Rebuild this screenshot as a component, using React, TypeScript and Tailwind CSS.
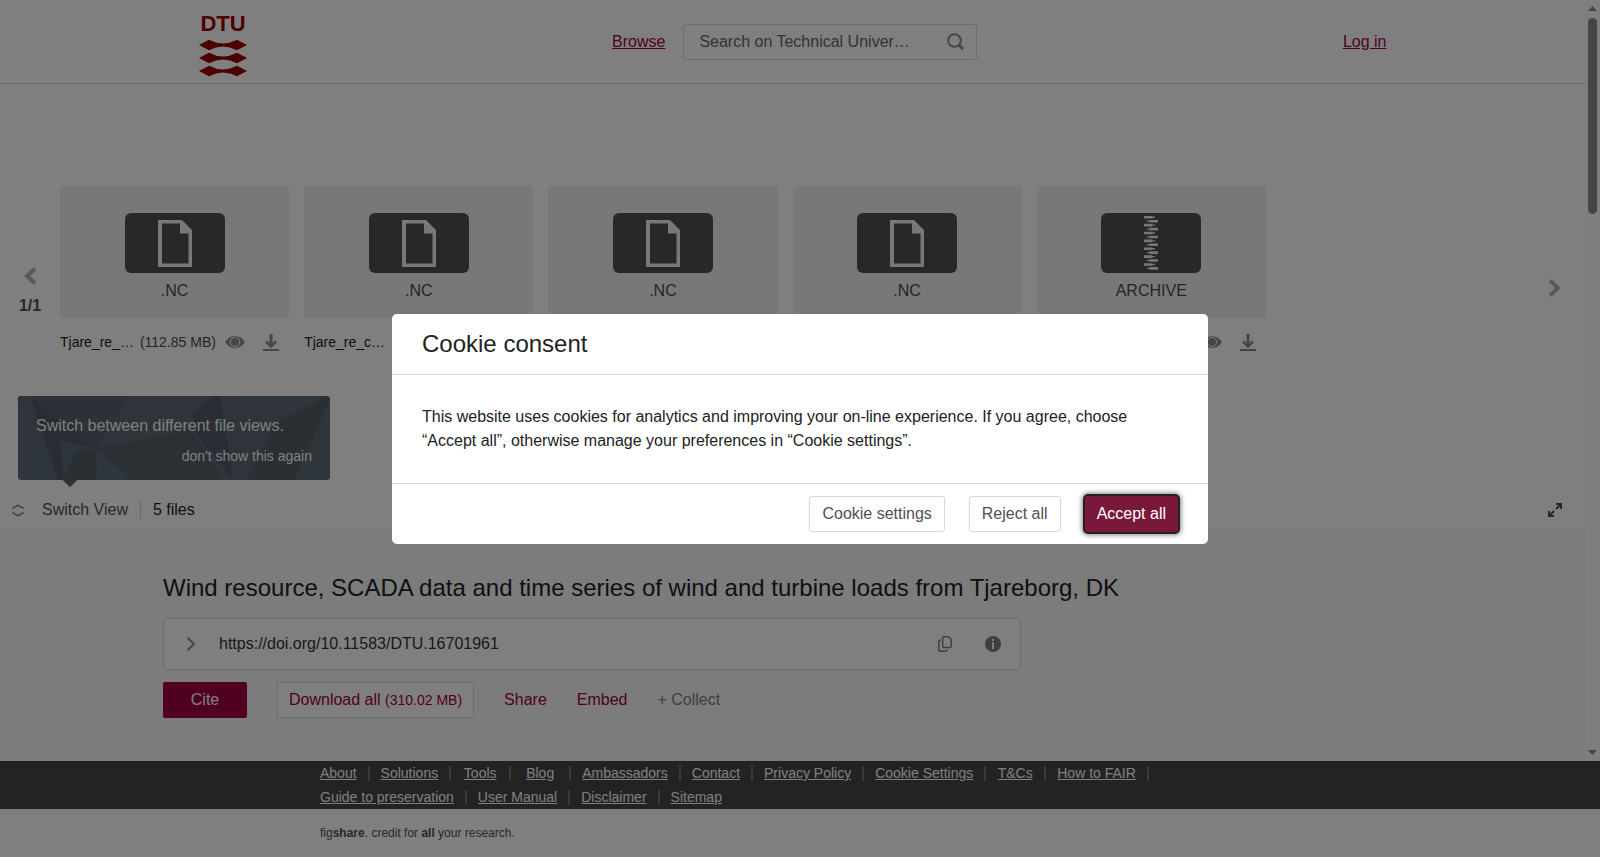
import type { ReactNode } from 'react';

type FileEntry = {
  id: number;
  kind: 'doc' | 'zip';
  label: string;
  name?: string;
  size?: string;
};

const files: FileEntry[] = [
  { id: 1, kind: 'doc', label: '.NC', name: 'Tjare_re_…', size: '(112.85 MB)' },
  { id: 2, kind: 'doc', label: '.NC', name: 'Tjare_re_c…' },
  { id: 3, kind: 'doc', label: '.NC' },
  { id: 4, kind: 'doc', label: '.NC' },
  { id: 5, kind: 'zip', label: 'ARCHIVE' },
];

const footerLinks = [
  'About',
  'Solutions',
  'Tools',
  'Blog',
  'Ambassadors',
  'Contact',
  'Privacy Policy',
  'Cookie Settings',
  'T&Cs',
  'How to FAIR',
  'Guide to preservation',
  'User Manual',
  'Disclaimer',
  'Sitemap',
];

function Logo() {
  return (
    <svg width="48" height="72" viewBox="0 0 48 72" fill="#990000" aria-label="DTU" role="img">
      <text
        x="24"
        y="25"
        textAnchor="middle"
        fontSize="22"
        fontWeight="700"
        fontFamily="'Liberation Sans', Arial, sans-serif"
      >
        DTU
      </text>
      {[39, 52, 65].map((y) => (
        <path
          key={y}
          transform={`translate(0 ${y})`}
          d="M0 0 L10 -5.3 Q17 -1.6 24 -1.6 Q31 -1.6 38 -5.3 L48 0 L38 5.3 Q31 1.6 24 1.6 Q17 1.6 10 5.3Z"
        />
      ))}
    </svg>
  );
}

function Header() {
  return (
    <header className="border-b border-[#d8d8d8]">
      <div className="mx-auto flex h-[83px] w-full max-w-[1188px] items-center justify-between">
        <a href="#home">
          <Logo />
        </a>
        <div className="flex items-center gap-[18px]">
          <a href="#browse" className="text-[#a00040] underline">
            Browse
          </a>
          <form className="flex h-9 w-[294px] items-center rounded-[3px] border border-[#d8d8d8] pr-3 pl-[15px]">
            <input
              type="text"
              aria-label="Search"
              placeholder="Search on Technical Univer…"
              className="min-w-0 flex-1 bg-transparent outline-none placeholder:text-[#666]"
            />
            <button type="button" aria-label="Submit search">
              <svg width="17" height="17" viewBox="0 0 17 17" fill="none" stroke="#8c8c8c">
                <circle cx="7.5" cy="7.5" r="6.3" strokeWidth="2" />
                <path d="M11.8 11.8 L16 16" strokeWidth="3" />
              </svg>
            </button>
          </form>
        </div>
        <a href="#login" className="text-[#a00040] underline">
          Log in
        </a>
      </div>
    </header>
  );
}

function DocIcon() {
  return (
    <svg width="34" height="47" viewBox="0 0 34 47" fill="#f1f1f1">
      <path fillRule="evenodd" d="M0 0 H24 L34 10 V47 H0Z M4 3.5 V43.5 H30.5 V13.5 H22 V3.5Z" />
    </svg>
  );
}

function ZipIcon() {
  const teeth = Array.from({ length: 14 }, (_, i) => i);
  return (
    <svg width="14" height="54" viewBox="0 0 14 54" fill="#f1f1f1">
      {teeth.map((i) => (
        <path
          key={i}
          transform={`translate(0 ${i * 3.93})`}
          d={i % 2 === 0 ? 'M0 0 H8 V0.6 H11 V2 H8 V2.6 H0Z' : 'M14 0 H6 V0.6 H3 V2 H6 V2.6 H14Z'}
        />
      ))}
    </svg>
  );
}

function EyeIcon() {
  return (
    <svg width="20" height="12" viewBox="0 0 20 12">
      <path d="M0 6 Q4 0 10 0 Q16 0 20 6 Q16 12 10 12 Q4 12 0 6Z" fill="#8c8c8c" />
      <circle cx="10" cy="6" r="4.7" fill="#8c8c8c" stroke="#fff" strokeWidth="1" />
    </svg>
  );
}

function DownloadIcon() {
  return (
    <svg width="16" height="17" viewBox="0 0 16 17" fill="none" stroke="#8c8c8c">
      <path d="M8 0 V12" strokeWidth="3" />
      <path d="M3 7.5 L8 12.5 L13 7.5" strokeWidth="2.6" />
      <path d="M0 16 H16" strokeWidth="2" />
    </svg>
  );
}

function FileCard({ file }: { file: FileEntry }) {
  return (
    <div className="min-w-0">
      <div className="flex h-[132px] flex-col items-center rounded-[3px] bg-[#f1f1f1] pt-[27px]">
        <div className="flex h-[60px] w-[100px] items-center justify-center rounded-md bg-[#505050]">
          {file.kind === 'doc' ? <DocIcon /> : <ZipIcon />}
        </div>
        <div className="mt-[6px] text-[#4a4a4a]">{file.label}</div>
      </div>
      <div className="mt-3 flex h-6 items-center pr-[10px] text-sm">
        {file.name && (
          <a href="#file" className="min-w-0 truncate text-[#222]">
            {file.name}
          </a>
        )}
        {file.size && <span className="ml-[6px] whitespace-nowrap text-[#4a4a4a]">{file.size}</span>}
        <button type="button" aria-label="Preview file" className="ml-auto">
          <EyeIcon />
        </button>
        <button type="button" aria-label="Download file" className="ml-[18px]">
          <DownloadIcon />
        </button>
      </div>
    </div>
  );
}

function Chevron({ direction }: { direction: 'left' | 'right' }) {
  return (
    <svg width="13" height="18" viewBox="0 0 13 18" fill="none" stroke="#b0b0b0" strokeWidth="4">
      <path d={direction === 'left' ? 'M11 1.5 L3 9 L11 16.5' : 'M2 1.5 L10 9 L2 16.5'} />
    </svg>
  );
}

function Carousel() {
  return (
    <div className="mt-[102px] flex">
      <div className="flex w-[60px] flex-col items-center pt-[81px]">
        <button type="button" aria-label="Previous files">
          <Chevron direction="left" />
        </button>
        <span className="mt-[9px] font-bold text-[#505050]">1/1</span>
      </div>
      <div className="grid min-w-0 flex-1 grid-cols-6 gap-[15px]">
        {files.map((file) => (
          <FileCard key={file.id} file={file} />
        ))}
      </div>
      <div className="flex w-[75px] items-start justify-end pt-[93px] pr-6">
        <button type="button" aria-label="Next files">
          <Chevron direction="right" />
        </button>
      </div>
    </div>
  );
}

function ViewHint() {
  return (
    <div className="relative mt-[42px] ml-[18px] h-[84px] w-[312px]">
      <div className="absolute top-[72px] left-11 size-4 rotate-45 rounded-[1px] bg-[#5a6670]"></div>
      <svg className="absolute inset-0 rounded-[3px]" width="312" height="84" viewBox="0 0 312 84">
        <rect width="312" height="84" fill="#5f6c77" />
        <path d="M0 0 H4 L0 8Z" fill="#545d69" />
        <path d="M12 0 H111 L79 52Z" fill="#59636f" />
        <path d="M12 0 L79 52 L42 45 L46 84Z" fill="#545b68" />
        <path d="M12 0 L42 45 L45 84 L40 84Z" fill="#535a67" />
        <path d="M79 52 L57 57 L45 84 H78Z" fill="#555f69" />
        <path d="M111 0 H195 L174 19 L79 52Z" fill="#5d6974" />
        <path d="M79 52 L174 34 L205 84 H113Z" fill="#56616b" />
        <path d="M174 19 L196 0 H202 L215 84 L180 40Z" fill="#555c68" />
        <path d="M202 0 L280 16 L229 84 H215Z" fill="#5c6874" />
        <path d="M258 28 L309 0 L312 3 L277 84 H229Z" fill="#555e69" />
      </svg>
      <div className="relative flex h-full flex-col px-[18px] pt-[18px] text-white">
        <span>Switch between different file views.</span>
        <button type="button" className="mt-[6px] self-end text-sm leading-6">
          don&apos;t show this again
        </button>
      </div>
    </div>
  );
}

function ViewToolbar() {
  return (
    <div className="mt-3 flex h-9 items-center pr-[23px] pl-3">
      <button type="button" className="flex items-center gap-[18px] text-[#505050]">
        <svg width="12" height="13" viewBox="0 0 12 13" fill="none" stroke="#8c8c8c" strokeWidth="1.6">
          <path d="M0.4 4.5 L6 1.2 L11.6 4.5 M0.4 8.5 L6 11.8 L11.6 8.5" />
        </svg>
        Switch View
      </button>
      <span className="ml-3 h-[18px] w-px bg-[#d0d0d0]"></span>
      <span className="ml-3 text-[#222]">5 files</span>
      <button type="button" aria-label="Full screen" className="ml-auto">
        <svg width="14" height="14" viewBox="0 0 14 14" fill="none" stroke="#505050" strokeWidth="2">
          <path d="M8 1 H13 V6 M13 1 L8 6" />
          <path d="M1 8 V13 H6 M1 13 L6 8" />
        </svg>
      </button>
    </div>
  );
}

function ItemDetails() {
  return (
    <section className="flex-1 bg-[#f8f8f8] pt-[42px] pl-[163px]">
      <h1 className="text-2xl leading-9 text-[#222]">
        Wind resource, SCADA data and time series of wind and turbine loads from Tjareborg, DK
      </h1>
      <div className="mt-3 flex h-[52px] max-w-[858px] items-center rounded-[5px] border border-[#d8d8d8] bg-white pr-[19px] pl-[22px]">
        <button type="button" aria-label="Show citation">
          <svg width="10" height="14" viewBox="0 0 10 14" fill="none" stroke="#8c8c8c" strokeWidth="2">
            <path d="M1.5 0.7 L8 7 L1.5 13.3" />
          </svg>
        </button>
        <span className="ml-[23px] text-[#333]">https://doi.org/10.11583/DTU.16701961</span>
        <button type="button" aria-label="Copy DOI" className="ml-auto">
          <svg width="14" height="16" viewBox="0 0 14 16" fill="none" stroke="#808080" strokeWidth="1.5">
            <path d="M6 0.8 H10.5 L13.2 3.5 V10 Q13.2 11.5 12 11.5 H6 Q4.7 11.5 4.7 10 V2 Q4.7 0.8 6 0.8Z" />
            <path d="M3 4.3 H2.2 Q0.8 4.3 0.8 5.8 V14 Q0.8 15.2 2.2 15.2 H8 Q9.5 15.2 9.5 13.5" />
          </svg>
        </button>
        <button type="button" aria-label="DOI information" className="ml-[33px]">
          <svg width="16" height="16" viewBox="0 0 16 16">
            <circle cx="8" cy="8" r="8" fill="#808080" />
            <path d="M7 3 H9 V5 H7Z M7 6.3 H9 V13 H7Z" fill="#fff" />
          </svg>
        </button>
      </div>
      <div className="mt-3 flex items-center gap-[30px] text-[#a00040]">
        <button type="button" className="h-9 w-[84px] rounded-[2px] bg-[#a00040] text-white">
          Cite
        </button>
        <button
          type="button"
          className="h-9 rounded-[3px] border border-[#d8d8d8] bg-white px-[11px] whitespace-nowrap"
        >
          Download all <span className="text-sm">(310.02 MB)</span>
        </button>
        <button type="button">Share</button>
        <button type="button">Embed</button>
        <button type="button" className="text-[#808080]">
          + Collect
        </button>
      </div>
    </section>
  );
}

function ScrollRail() {
  return (
    <div className="flex w-[15px] flex-col items-center bg-[#fcfcfc] pt-[6px] pb-[6px]" aria-hidden="true">
      <svg width="9" height="5" viewBox="0 0 9 5" fill="#8a8a8a">
        <path d="M0 5 L4.5 0 L9 5Z" />
      </svg>
      <div className="mt-[7px] h-[196px] w-[9px] rounded-full bg-[#8a8a8a]"></div>
      <svg className="mt-auto" width="9" height="5" viewBox="0 0 9 5" fill="#8a8a8a">
        <path d="M0 0 L4.5 5 L9 0Z" />
      </svg>
    </div>
  );
}

function Footer() {
  return (
    <footer>
      <nav className="bg-[#464646]">
        <ul className="mx-auto flex max-w-[960px] flex-wrap text-sm leading-6 text-white">
          {footerLinks.map((link, i) => (
            <li key={link} className="flex items-center">
              <a href="#footer" className="min-w-9 text-center underline">
                {link}
              </a>
              {i < footerLinks.length - 1 && <span className="mx-[11px] h-[15px] w-[2px] bg-[#747474]"></span>}
            </li>
          ))}
        </ul>
      </nav>
      <div className="bg-white">
        <p className="mx-auto max-w-[960px] py-3 text-xs leading-6 text-[#505050]">
          fig<b>share</b>. credit for <b>all</b> your research.
        </p>
      </div>
    </footer>
  );
}

function ModalButton({ children }: { children: ReactNode }) {
  return (
    <button type="button" className="h-9 rounded-[3px] border border-[#d8d8d8] bg-white px-3 text-[#505050]">
      {children}
    </button>
  );
}

function CookieDialog() {
  return (
    <div className="fixed inset-0 flex items-center justify-center bg-black/50">
      <div
        role="dialog"
        aria-modal="true"
        aria-labelledby="cookie-title"
        className="w-full max-w-[816px] rounded-[5px] bg-white text-[#222]"
      >
        <h2 id="cookie-title" className="border-b border-[#d8d8d8] px-[30px] py-3 text-2xl leading-9">
          Cookie consent
        </h2>
        <p className="px-[30px] py-[30px]">
          This website uses cookies for analytics and improving your on-line experience. If you agree, choose “Accept
          all”, otherwise manage your preferences in “Cookie settings”.
        </p>
        <div className="flex justify-end gap-6 border-t border-[#d8d8d8] px-[30px] py-3">
          <ModalButton>Cookie settings</ModalButton>
          <ModalButton>Reject all</ModalButton>
          <button
            type="button"
            className="h-9 rounded-[3px] bg-[#7a183b] px-3 text-white shadow-[0_0_0_2px_#222,0_0_5px_3px_rgba(0,0,0,0.5)]"
          >
            Accept all
          </button>
        </div>
      </div>
    </div>
  );
}

export default function App() {
  return (
    <div className="flex h-screen flex-col bg-white font-['Liberation_Sans',Arial,sans-serif] text-base">
      <div className="flex min-h-0 flex-1">
        <main className="flex min-w-0 flex-1 flex-col overflow-hidden">
          <Header />
          <Carousel />
          <ViewHint />
          <ViewToolbar />
          <ItemDetails />
        </main>
        <ScrollRail />
      </div>
      <Footer />
      <CookieDialog />
    </div>
  );
}
